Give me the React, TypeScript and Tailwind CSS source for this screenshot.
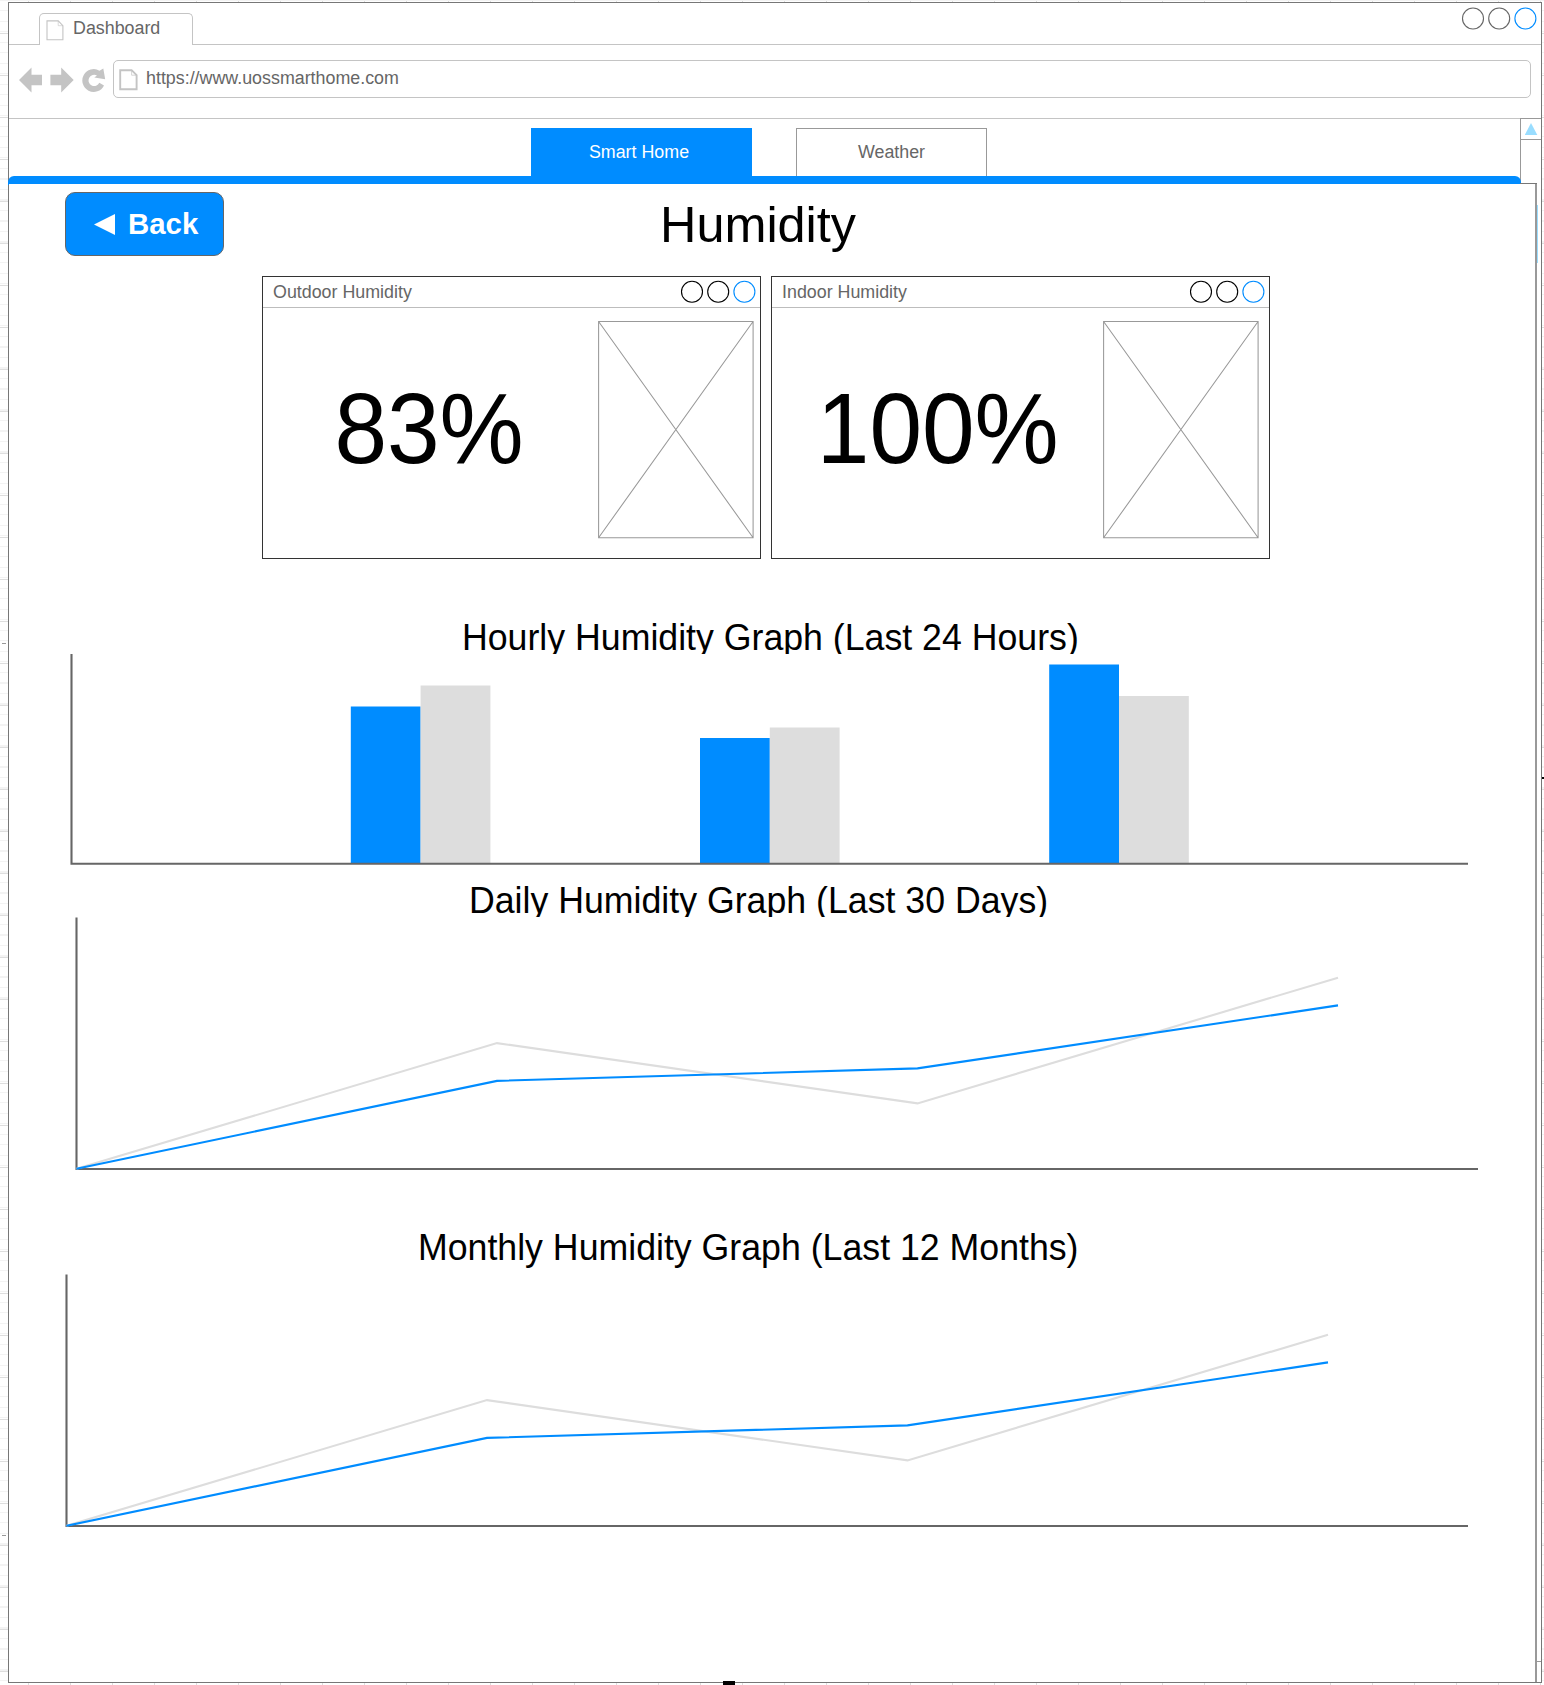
import React from "react";

type Point = [number, number];

function WindowDots({ stroke, cy }: { stroke: string; cy: number }) {
  return (
    <svg width="76" height="24" viewBox="0 0 76 24" fill="none" strokeWidth="1.1" className="shrink-0">
      <circle cx="12" cy={cy} r="10.5" stroke={stroke} />
      <circle cx="38.2" cy={cy} r="10.5" stroke={stroke} />
      <circle cx="64.4" cy={cy} r="10.5" stroke="#008cff" />
    </svg>
  );
}

function TabPageIcon() {
  return (
    <svg width="18" height="21" viewBox="0 0 18 21" fill="none" stroke="#c4c4c4" className="shrink-0">
      <path d="M1 .9h11.2l4.7 4.8v14H1z" strokeWidth="1.1" />
      <path d="M12.2.9v4.8h4.7" strokeWidth=".6" />
    </svg>
  );
}

function UrlPageIcon() {
  return (
    <svg width="19" height="22" viewBox="0 0 19 22" fill="none" stroke="#c4c4c4" className="shrink-0">
      <path d="M1.2 1.2h11.4l5 5v14H1.2z" strokeWidth="1.9" />
      <path d="M12.6 1.2v5h5" strokeWidth=".7" />
    </svg>
  );
}

function NavIcons() {
  return (
    <svg width="88" height="28" viewBox="0 0 88 28" className="shrink-0" fill="#c4c4c4">
      <path d="M0 14 12.5 1.500v7.200H23v10.500H12.500v7.300z" />
      <path d="M54.700 14 42.200 1.500v7.200H31.400v10.500h10.800v7.300z" />
      <path d="M80.500 4.700 84.300 2.500 86.200 13.200 75.300 11.600 78 9.600A5.600 5.600 0 1 0 80.300 16.700L85 19.500A11.400 11.400 0 1 1 80.500 4.700z" />
    </svg>
  );
}

function HumidityCard({ title, value, pad, boxGap }: { title: string; value: string; pad: string; boxGap: string }) {
  return (
    <section className="flex h-[283px] w-[499px] flex-col border border-[#333] bg-white">
      <header className="flex h-[31px] shrink-0 items-center justify-between border-b border-[#bdbdbd] pl-[10px] pr-[4px]">
        <h2 className="text-[17.85px] leading-[20px] text-[#666]">{title}</h2>
        <WindowDots stroke="#000" cy={11.7} />
      </header>
      <div className={`flex flex-1 justify-between pt-[13px] ${boxGap}`}>
        <p className={`pt-[55px] text-[96px] leading-[108px] text-black ${pad}`}>
          <span className="inline-block origin-[50%_87px] scale-x-[0.985] scale-y-[1.045]">{value}</span>
        </p>
        <svg width="156" height="218" viewBox="0 0 156 218" fill="none" stroke="#999" strokeWidth="1.05">
          <path d="M.6.500h154.500v216.200H.6zL155.100 216.700M155.100.5.6 216.700" />
        </svg>
      </div>
    </section>
  );
}

const bars: { x: number; y: number; tone: string }[] = [
  { x: 279.3, y: 52.5, tone: "#008cff" },
  { x: 349.1, y: 31.5, tone: "#dddddd" },
  { x: 628.5, y: 84, tone: "#008cff" },
  { x: 698.3, y: 73.5, tone: "#dddddd" },
  { x: 977.7, y: 10.5, tone: "#008cff" },
  { x: 1047.5, y: 42, tone: "#dddddd" },
];

function BarChart() {
  return (
    <svg width="1400" height="212" viewBox="-1.5 0 1400 212" className="block">
      {bars.map((b) => (
        <rect key={b.x} x={b.x} y={b.y} width="69.8" height={209.5 - b.y} fill={b.tone} />
      ))}
      <path d="M0 0v209.700h1396.500" fill="none" stroke="#666" strokeWidth="2.1" />
    </svg>
  );
}

const outdoor: Point[] = [[0, 251.4], [420.5, 125.7], [841, 186], [1261.5, 60.3]];
const indoor: Point[] = [[0, 251.4], [420.5, 163.5], [841, 151], [1261.5, 88]];

function LineChart() {
  return (
    <svg width="1404" height="254" viewBox="-1.5 -0.4 1404 254" className="block" fill="none" strokeWidth="2.1">
      <path d="M0 0v251.600h1401.500" stroke="#666" />
      <polyline points={outdoor.map((p) => p.join(",")).join(" ")} stroke="#dddddd" />
      <polyline points={indoor.map((p) => p.join(",")).join(" ")} stroke="#008cff" />
    </svg>
  );
}

function GraphTitle({ children, className }: { children: string; className: string }) {
  return (
    <h2 className={`overflow-hidden whitespace-nowrap text-[35.7px] leading-[42px] text-black ${className}`}>
      <span className="inline-block origin-[0_34px] scale-y-[1.045]">{children}</span>
    </h2>
  );
}

export default function App() {
  return (
    <div className="relative h-[1685px] w-[1544px] overflow-hidden bg-white bg-[repeating-linear-gradient(to_bottom,transparent_0_33px,#dedede_33px_34px,transparent_34px_42px),repeating-linear-gradient(to_bottom,#f3f3f3_0_1px,transparent_1px_10.5px),repeating-linear-gradient(to_right,transparent_0_28px,#dedede_28px_29px,transparent_29px_42px)] pl-[8px] pt-[2px] font-['Liberation_Sans',Arial,sans-serif]">
      <div className="flex h-[1681px] w-[1534px] flex-col border border-[#777] bg-white">
        <div className="flex h-[42px] shrink-0 items-end">
          <div className="h-full w-[30px] border-b border-[#c4c4c4]" />
          <div className="flex h-[32px] w-[154px] items-start rounded-t-[5px] border-x border-t border-[#c4c4c4] pl-[6px] pt-[6px]">
            <TabPageIcon />
            <span className="-mt-[2px] ml-[9px] text-[17.85px] leading-[20px] text-[#666]">Dashboard</span>
          </div>
          <div className="flex h-full flex-1 justify-end border-b border-[#c4c4c4] pr-[4px] pt-[3px]">
            <WindowDots stroke="#666" cy={12.5} />
          </div>
        </div>
        <div className="flex h-[74px] shrink-0 border-b border-[#c4c4c4] pl-[10px] pt-[15px]">
          <div className="mr-[6px] pt-[6px]">
            <NavIcons />
          </div>
          <div className="flex h-[38px] w-[1418px] items-start rounded-[5px] border border-[#c4c4c4] pl-[5px] pt-[8px]">
            <UrlPageIcon />
            <span className="-mt-[1px] ml-[8px] text-[17.85px] leading-[20px] text-[#666]">https://www.uossmarthome.com</span>
          </div>
        </div>

        <div className="relative flex min-h-0 flex-1 flex-col">
          <aside className="absolute -top-px right-0 h-[1544px] w-[21px] border-y border-l border-[#999]">
            <div className="flex h-[21px] items-center justify-center border-b border-[#999]">
              <svg width="13" height="12" viewBox="0 0 13 12">
                <path d="M6 0 12.300 12H-.3z" fill="#99ddff" />
              </svg>
            </div>
            <div className="ml-auto mr-[3px] mt-[65px] h-[58px] w-[14px] bg-[#99ddff]" />
          </aside>
          <nav className="flex h-[57px] shrink-0 items-end pl-[522px]">
            <button className="h-[48px] w-[221px] bg-[#008cff] pr-[5px] text-[17.85px] leading-[20px] text-white">Smart Home</button>
            <button className="ml-[44px] h-[48px] w-[191px] border-x border-t border-[#999] pb-[1px] text-[17.85px] leading-[20px] text-[#666]">Weather</button>
          </nav>
          <div className="relative -ml-px h-[9px] w-[1513px] shrink-0 rounded-t-[6px] bg-[#008cff]" />
          <main className="relative -mt-px w-[1528px] flex-1 border-r-2 border-[#999] bg-white">
            <div className="absolute -top-px right-[-2px] h-px w-[17px] bg-[#777]" />
            <div className="flex h-[92px] items-start pl-[56px] pt-[8px]">
              <button className="flex h-[64px] w-[159px] items-center rounded-[10px] border border-[#666] bg-[#008cff] pl-[28px] text-[29.4px] font-bold text-white">
                <svg width="21" height="21" viewBox="0 0 21 21">
                  <path d="M0 10.500 21 0v21z" fill="#fff" />
                </svg>
                <span className="ml-[13px]">Back</span>
              </button>
              <h1 className="ml-[436px] mt-[5px] text-[50.4px] leading-[56px] text-black">Humidity</h1>
            </div>
            <div className="flex gap-[10px] pl-[253px]">
              <HumidityCard title="Outdoor Humidity" value="83%" pad="pl-[70px]" boxGap="pr-[6px]" />
              <HumidityCard title="Indoor Humidity" value="100%" pad="pl-[43px]" boxGap="pr-[10px]" />
            </div>
            <GraphTitle className="ml-[453px] mt-[58px] h-[37px]">Hourly Humidity Graph (Last 24 Hours)</GraphTitle>
            <div className="ml-[61px]">
              <BarChart />
            </div>
            <GraphTitle className="ml-[460px] mt-[14px] h-[37px]">Daily Humidity Graph (Last 30 Days)</GraphTitle>
            <div className="ml-[66px]">
              <LineChart />
            </div>
            <GraphTitle className="ml-[409px] mt-[56px] h-[47px]">Monthly Humidity Graph (Last 12 Months)</GraphTitle>
            <div className="ml-[56px]">
              <LineChart />
            </div>
          </main>
        </div>
      </div>
      <div className="absolute left-[723px] top-[1681px] h-[4px] w-[12px] bg-black" />
      <div className="absolute left-[1542px] top-[777px] h-[2px] w-[2px] bg-black" />
      <div className="absolute left-[2px] top-[1535px] h-px w-[4px] bg-[#999]" />
      <div className="absolute left-[2px] top-[643px] h-px w-[4px] bg-[#999]" />
    </div>
  );
}
